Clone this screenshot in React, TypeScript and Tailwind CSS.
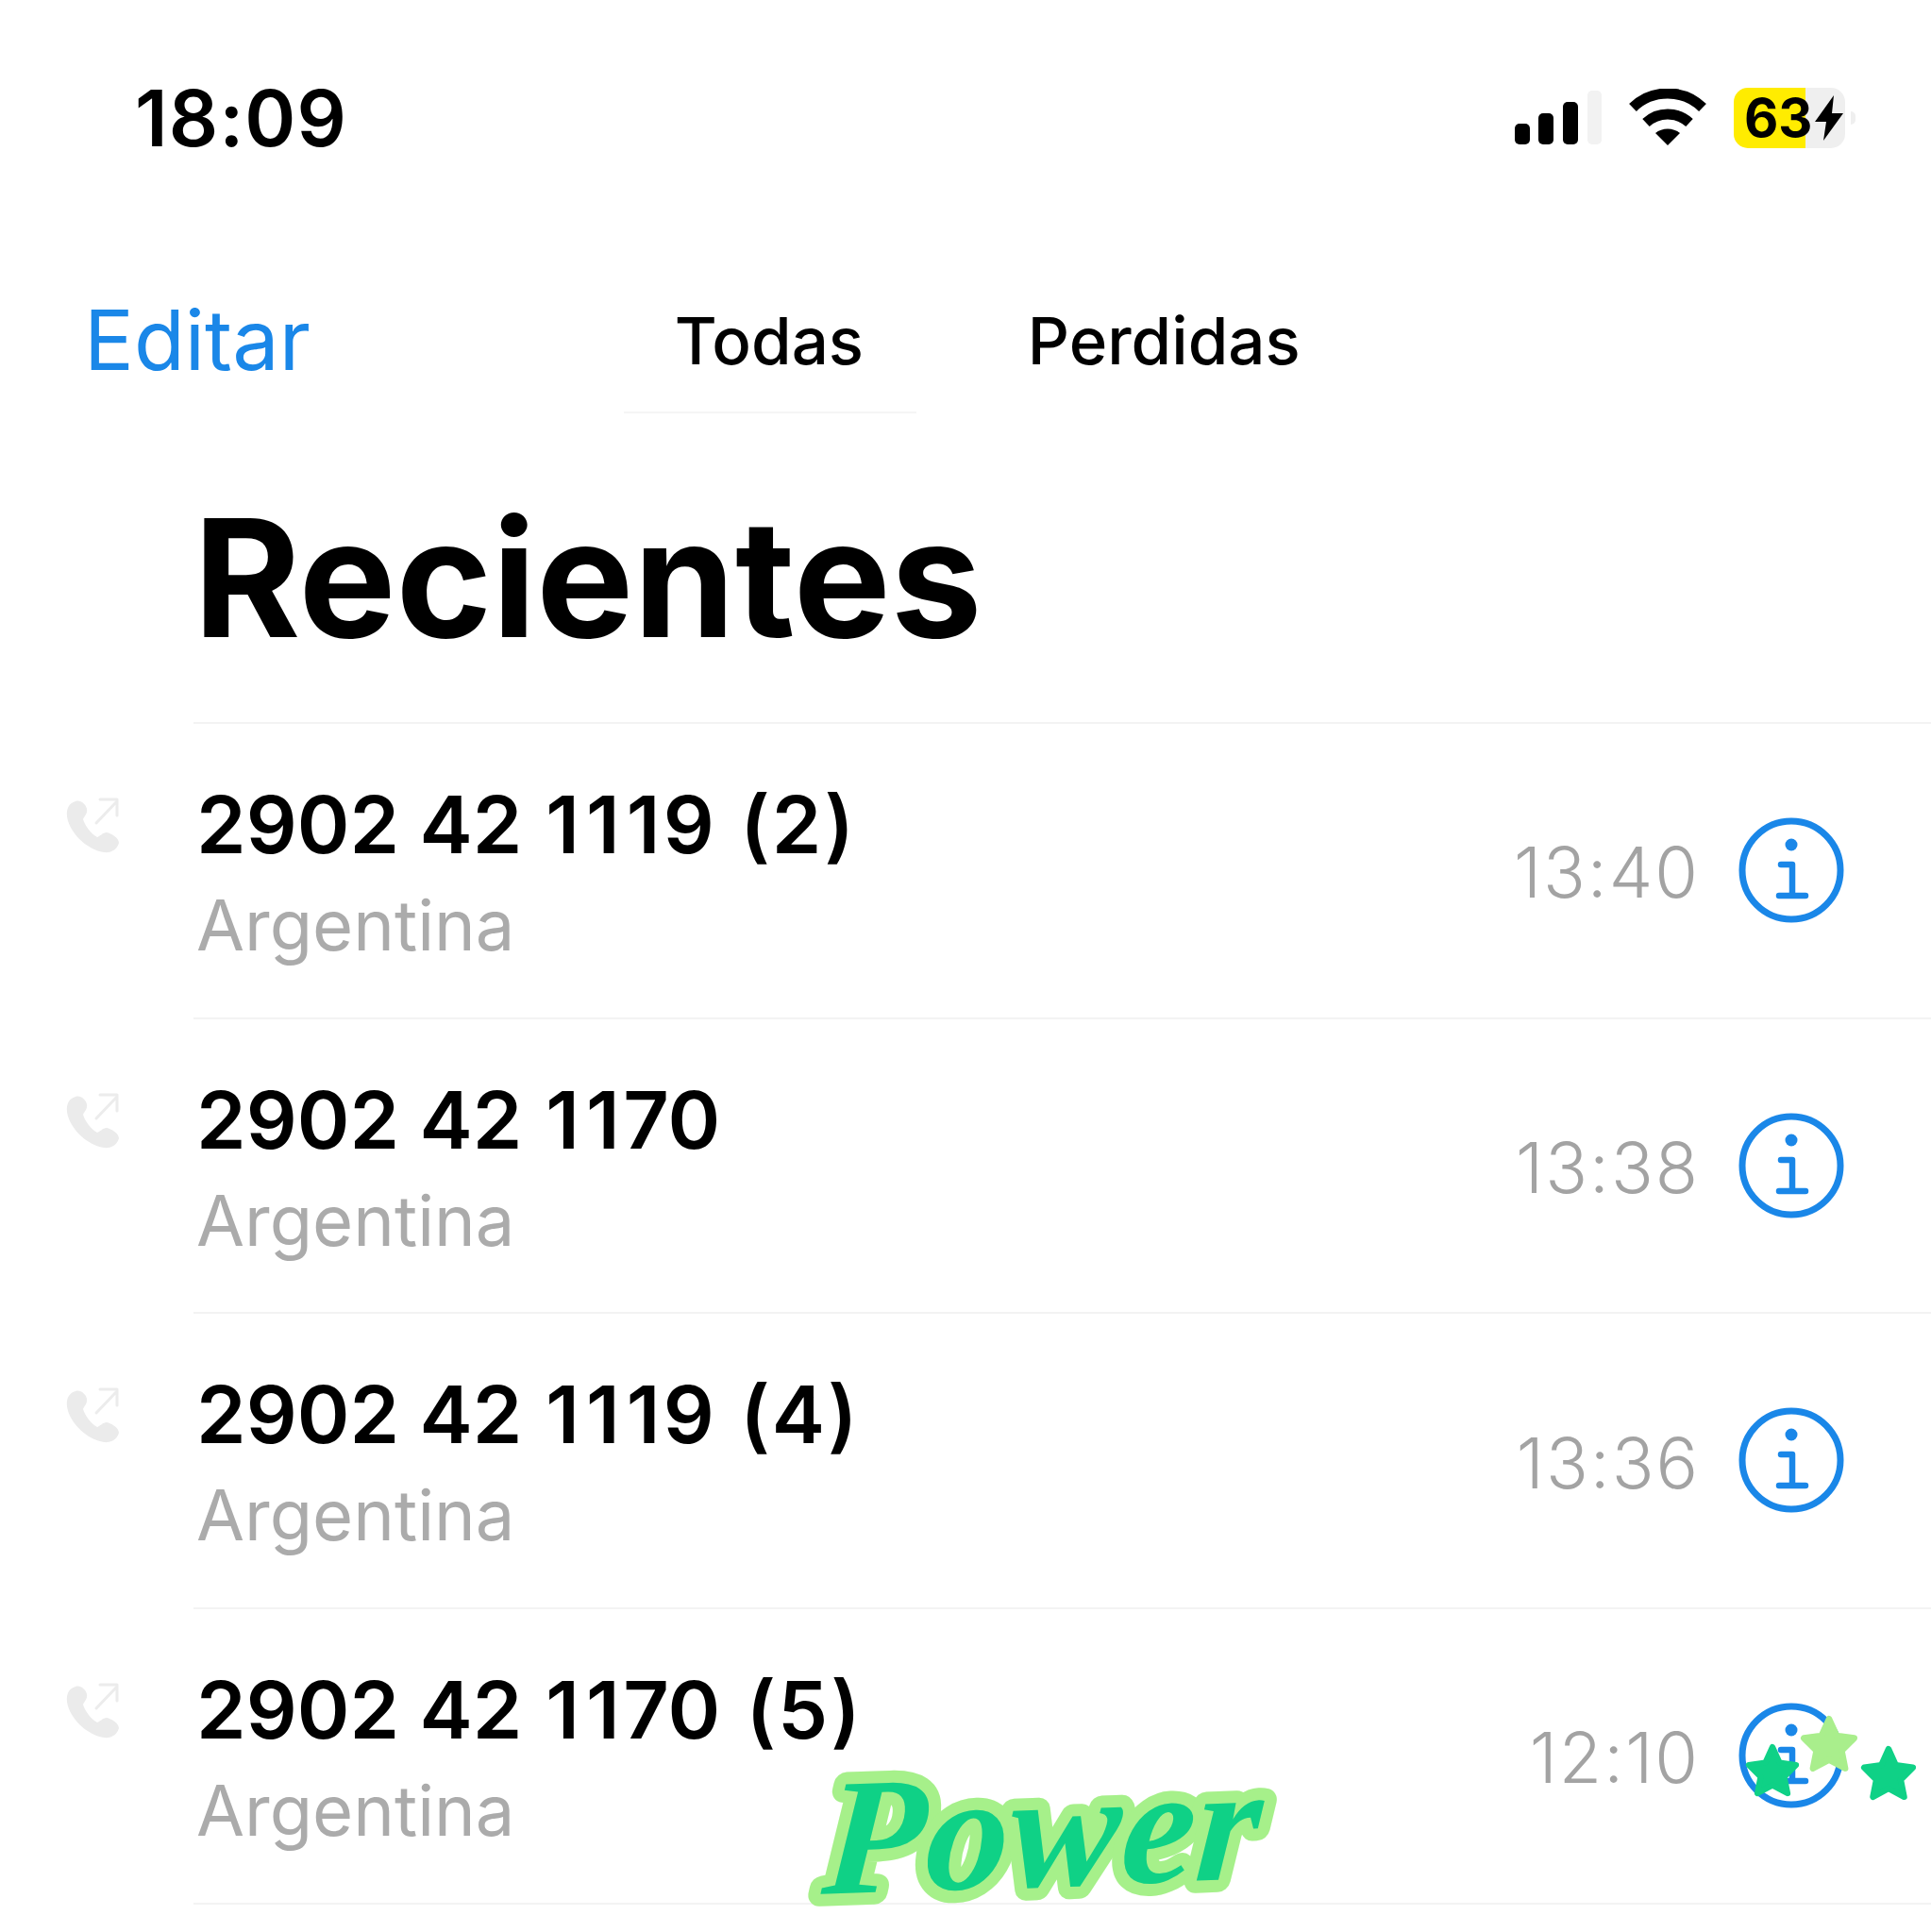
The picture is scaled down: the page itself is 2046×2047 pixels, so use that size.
const rows = [
  { n: "2902 42 1119 (2)", t: "13:40" },
  { n: "2902 42 1170", t: "13:38" },
  { n: "2902 42 1119 (4)", t: "13:36" },
  { n: "2902 42 1170 (5)", t: "12:10" },
];

function PhoneOut() {
  return (
    <svg width="60" height="64" viewBox="0 0 60 64" fill="none">
      <path d="M12 7 C5 9 2 15 3 23 C5 39 23 58 42 61 C50 62 56 58 58 51 C58 46 50 41 45 40 C41 40 38 44 35 45 C29 42 22 33 20 26 C21 23 25 20 24 15 C23 10 17 5 12 7 Z" fill="#ebebeb" />
      <path d="M34 30 L55 8 M38 5 H56 V22" stroke="#ececec" strokeWidth="3" strokeLinecap="round" strokeLinejoin="round" />
    </svg>
  );
}

function InfoIcon() {
  return (
    <svg width="112" height="112" viewBox="0 0 112 112" fill="none">
      <circle cx="56" cy="56" r="52" stroke="#1a87e8" strokeWidth="7" />
      <circle cx="56" cy="29" r="6.5" fill="#1a87e8" />
      <path d="M45 50 H57 V83 M43 83 H71" stroke="#1a87e8" strokeWidth="6.5" strokeLinecap="round" strokeLinejoin="round" />
    </svg>
  );
}

function Star({ color, size }: { color: string; size: number }) {
  return (
    <svg width={size} height={size} viewBox="0 0 24 24">
      <path d="M12 2 L15 8.6 L22 9.6 L17 14.6 L18.4 21.6 L12 18.2 L5.6 21.6 L7 14.6 L2 9.6 L9 8.6 Z" fill={color} stroke={color} strokeWidth="2.5" strokeLinejoin="round" />
    </svg>
  );
}

function Digits({ text }: { text: string }) {
  return (
    <>
      {text.split("").map((c, i) => {
        if (c === "1") return <span key={i} className="px-[3.5px]">1</span>;
        if (c === "(") return <span key={i} className="ml-[6px] mr-[2px]">(</span>;
        if (c === ")") return <span key={i} className="ml-[3px]">)</span>;
        return <span key={i}>{c}</span>;
      })}
    </>
  );
}

function Row({ n, t }: { n: string; t: string }) {
  return (
    <div className="flex h-[312.7px]">
      <div className="w-[205px] shrink-0 pl-[68px] pt-[77px]">
        <PhoneOut />
      </div>
      <div className="flex flex-1 items-center border-t-2 border-[#f3f3f3] pr-[92px]">
        <div className="flex-1 pl-[3px] pt-[5px]">
          <div className="relative top-[2px] text-[84.5px] leading-[110px] font-semibold whitespace-pre text-black">
            <Digits text={n} />
          </div>
          <div className="text-[74px] leading-[108px] text-[#ababab]">Argentina</div>
        </div>
        <div className="mt-[5px] mr-[41px] text-[74px] font-light tracking-[2px] text-[#a3a3a3]">{t}</div>
        <div className="-mt-[1px]"><InfoIcon /></div>
      </div>
    </div>
  );
}

export default function App() {
  return (
    <div className="relative h-[2047px] w-[2046px] overflow-hidden bg-white font-['Inter',sans-serif]">
      <div className="flex h-[250px] items-center justify-between pl-[143px] pr-[80px]">
        <div className="text-[82px] font-semibold tracking-[1px] text-black">18:09</div>
        <div className="flex items-center">
          <svg width="92" height="58" viewBox="0 0 92 58">
            <rect x="0" y="35" width="16" height="22" rx="5" fill="#000" />
            <rect x="25" y="24" width="16" height="33" rx="5" fill="#000" />
            <rect x="51" y="12" width="16" height="45" rx="5" fill="#000" />
            <rect x="77" y="0" width="15" height="57" rx="5" fill="#f2f2f2" />
          </svg>
          <svg className="ml-[28px]" width="84" height="62" viewBox="0 0 84 62" fill="none">
            <path d="M5 20 C25 0 59 0 79 20" stroke="#000" strokeWidth="11" />
            <path d="M19 36 C32 24 52 24 65 36" stroke="#000" strokeWidth="11" />
            <path d="M29 47 C36 41 48 41 55 47 L42 60 Z" fill="#000" />
          </svg>
          <div className="ml-[28px] flex h-[64px] w-[118px] items-center rounded-[15px] bg-[linear-gradient(90deg,#ffec00_0,#ffec00_76px,#efefef_76px,#efefef_100%)] pl-[11px]">
            <span className="text-[56px] leading-none font-bold text-black">63</span>
            <svg width="32" height="50" viewBox="0 0 32 50" className="ml-[1px]">
              <path d="M21 1 L1 29 H13 L10 49 L31 20 H19 Z" fill="#000" />
            </svg>
          </div>
          <div className="ml-[6px] h-[14px] w-[5px] rounded-r-full bg-[#efefef]" />
        </div>
      </div>

      <div className="flex h-[188px] items-start pl-[89px]">
        <div className="mt-[57px] text-[88px] leading-[106px] text-[#1a87e8]">Editar</div>
        <div className="ml-[332px] flex h-[188px] w-[310px] justify-center border-b-2 border-[#f5f5f5] pt-[68px]">
          <span className="-ml-[2px] text-[69px] leading-[86px] font-medium text-black">Todas</span>
        </div>
        <div className="ml-[118px] mt-[68px] text-[69px] leading-[86px] font-medium text-black">Perdidas</div>
      </div>

      <div className="h-[327px] pl-[205px] pt-[81px] text-[173px] leading-[186px] font-bold text-black">Recientes</div>

      {rows.map((r) => (
        <Row key={r.n + r.t} n={r.n} t={r.t} />
      ))}
      <div className="ml-[205px] border-t-2 border-[#f3f3f3]" />

      <svg className="absolute left-[850px] top-[1830px]" width="560" height="217" viewBox="0 0 560 217">
        <text x="38" y="176" transform="rotate(-2 38 176) skewX(-6)" fontFamily="'Liberation Serif', serif" fontWeight="700" fontStyle="italic" fontSize="176" fill="#0fd186" stroke="#a6f08a" strokeWidth="26" strokeLinejoin="round" paintOrder="stroke" letterSpacing="1">Power</text>
      </svg>
      <div className="absolute left-[1848px] top-[1846px]"><Star color="#0fd186" size={60} /></div>
      <div className="absolute left-[1906px] top-[1816px]"><Star color="#a9ee8c" size={64} /></div>
      <div className="absolute left-[1970px] top-[1848px]"><Star color="#0fd186" size={62} /></div>
    </div>
  );
}
